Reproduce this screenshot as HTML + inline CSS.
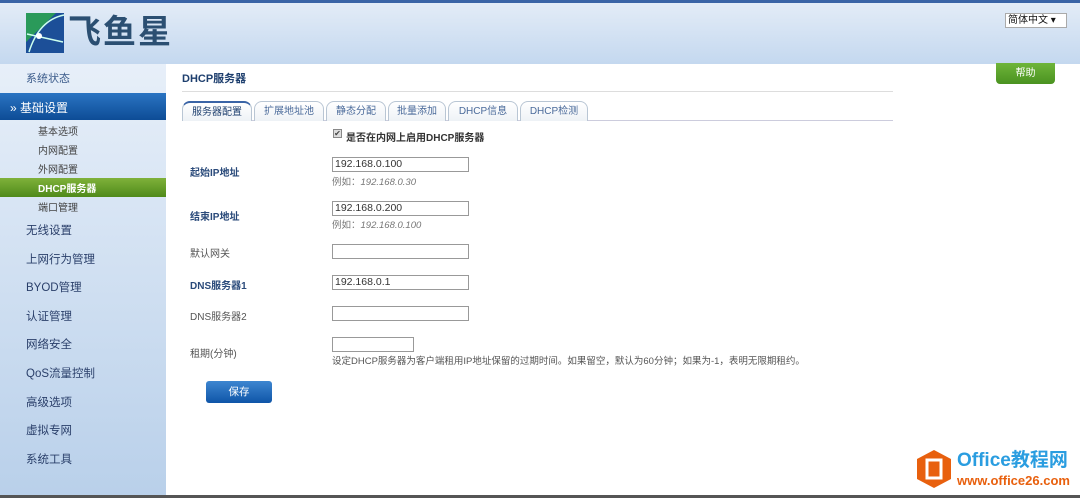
<!DOCTYPE html>
<html><head><meta charset="utf-8"><style>
*{margin:0;padding:0;box-sizing:border-box}
body{width:1080px;height:498px;overflow:hidden;background:#fff;font-family:"Liberation Sans","Noto Sans CJK SC",sans-serif;position:relative;font-size:10px;color:#444}
.a{position:absolute;white-space:nowrap}
#hdr{left:0;top:0;width:1080px;height:64px;background:linear-gradient(#e3ecf7,#c4d8ef);border-top:3px solid #3a64a6}
#side{left:0;top:64px;width:166px;height:432px;background:linear-gradient(#e7eff9,#b9d0ea)}
#bot{left:0;top:495px;width:1080px;height:3px;background:#555}
.s{left:26px;font-size:11.5px;color:#2a3f6a}
.ss{left:38px;font-size:10px;color:#444}
.tab{top:101px;height:20px;border:1px solid #b9c6d4;border-bottom:none;border-radius:8px 8px 0 0;background:linear-gradient(#fff,#eef2f6);font-size:10px;color:#4a6a9a;text-align:center;line-height:20px}
.lb{left:190px;font-size:10px;color:#555}
.lbb{font-weight:bold;color:#2a4a7a}
.in{left:332px;width:137px;height:15px;border:1px solid #999;background:#fff;font-size:10.5px;color:#333;padding-left:2px;line-height:13px}
.hint{left:332px;font-size:9.5px;color:#777}
</style></head><body>
<div id="hdr" class="a"></div>
<svg class="a" style="left:25px;top:12px" width="40" height="42"><rect x="1" y="1" width="38" height="40" fill="#1c4f98"/><path d="M1 1h30L1 30z" fill="#2a9a5a"/><path d="M4 40Q14 8 39 3M2 22L38 30" stroke="#cfe" stroke-width="1.5" fill="none"/><circle cx="14" cy="24" r="3" fill="#fff"/></svg>
<div class="a" style="left:68px;top:12px;font-size:33px;font-weight:bold;color:#2b4f72;letter-spacing:2px;line-height:40px">飞鱼星</div>
<div class="a" style="left:1005px;top:13px;width:62px;height:15px;border:1px solid #aaa;background:#fff;font-size:10px;color:#111;line-height:13px;padding-left:2px">简体中文 ▾</div>
<div id="side" class="a"></div>
<div class="a s" style="top:70px;color:#3a5a8a;font-size:11px">系统状态</div>
<div class="a" style="left:0;top:93px;width:166px;height:27px;background:linear-gradient(#2a74c2,#0d4c96)"></div>
<div class="a" style="left:10px;top:99px;font-size:12px;color:#fff">» 基础设置</div>
<div class="a ss" style="top:123px">基本选项</div>
<div class="a ss" style="top:142px">内网配置</div>
<div class="a ss" style="top:161px">外网配置</div>
<div class="a" style="left:0;top:178px;width:166px;height:19px;background:linear-gradient(#7fb13a,#4f8a1a)"></div>
<div class="a ss" style="top:180px;color:#fff;font-weight:bold">DHCP服务器</div>
<div class="a ss" style="top:199px">端口管理</div>
<div class="a s" style="top:222px">无线设置</div>
<div class="a s" style="top:251px">上网行为管理</div>
<div class="a s" style="top:279px">BYOD管理</div>
<div class="a s" style="top:308px">认证管理</div>
<div class="a s" style="top:336px">网络安全</div>
<div class="a s" style="top:365px">QoS流量控制</div>
<div class="a s" style="top:394px">高级选项</div>
<div class="a s" style="top:422px">虚拟专网</div>
<div class="a s" style="top:451px">系统工具</div>
<div class="a" style="left:182px;top:70px;font-size:11px;font-weight:bold;color:#1e3f6e">DHCP服务器</div>
<div class="a" style="left:182px;top:91px;width:711px;height:1px;background:#ddd"></div>
<div class="a" style="left:996px;top:63px;width:59px;height:21px;background:linear-gradient(#6fb53a,#4a9220);border-radius:0 0 4px 4px;color:#fff;font-size:10px;text-align:center;line-height:21px">帮助</div>
<div class="a" style="left:182px;top:120px;width:711px;height:1px;background:#ccd"></div>
<div class="a tab" style="left:182px;width:70px;border-top:2px solid #3a64a6;color:#1e3f6e">服务器配置</div>
<div class="a tab" style="left:254px;width:70px">扩展地址池</div>
<div class="a tab" style="left:326px;width:60px">静态分配</div>
<div class="a tab" style="left:388px;width:58px">批量添加</div>
<div class="a tab" style="left:448px;width:70px">DHCP信息</div>
<div class="a tab" style="left:520px;width:68px">DHCP检测</div>
<div class="a" style="left:333px;top:129px;width:9px;height:9px;border:1px solid #888;background:#ddd;font-size:8px;line-height:8px;text-align:center">✔</div>
<div class="a" style="left:346px;top:129px;font-size:10px;font-weight:bold;color:#333">是否在内网上启用DHCP服务器</div>
<div class="a lb lbb" style="top:164px">起始IP地址</div>
<div class="a in" style="top:157px">192.168.0.100</div>
<div class="a hint" style="top:174px">例如：<i>192.168.0.30</i></div>
<div class="a lb lbb" style="top:208px">结束IP地址</div>
<div class="a in" style="top:201px">192.168.0.200</div>
<div class="a hint" style="top:217px">例如：<i>192.168.0.100</i></div>
<div class="a lb" style="top:245px">默认网关</div>
<div class="a in" style="top:244px"></div>
<div class="a lb lbb" style="top:277px">DNS服务器1</div>
<div class="a in" style="top:275px">192.168.0.1</div>
<div class="a lb" style="top:308px">DNS服务器2</div>
<div class="a in" style="top:306px"></div>
<div class="a lb" style="top:345px">租期(分钟)</div>
<div class="a in" style="top:337px;width:82px"></div>
<div class="a hint" style="top:353px;color:#555">设定DHCP服务器为客户端租用IP地址保留的过期时间。如果留空，默认为60分钟；如果为-1，表明无限期租约。</div>
<div class="a" style="left:206px;top:381px;width:66px;height:22px;background:linear-gradient(#3d86d0,#0f55a8);border-radius:3px;color:#fff;font-size:10.5px;text-align:center;line-height:22px">保存</div>
<svg class="a" style="left:916px;top:449px" width="36" height="40"><polygon points="18,1 35,10 35,30 18,39 1,30 1,10" fill="#e8600e"/><rect x="11" y="11" width="14" height="18" fill="none" stroke="#fff" stroke-width="3"/></svg>
<div class="a" style="left:957px;top:450px;font-size:19px;font-weight:bold;color:#2a9de0;line-height:22px">Office教程网</div>
<div class="a" style="left:957px;top:473px;font-size:13px;font-weight:bold;color:#e8600e">www.office26.com</div>
<div id="bot" class="a"></div>
</body></html>
